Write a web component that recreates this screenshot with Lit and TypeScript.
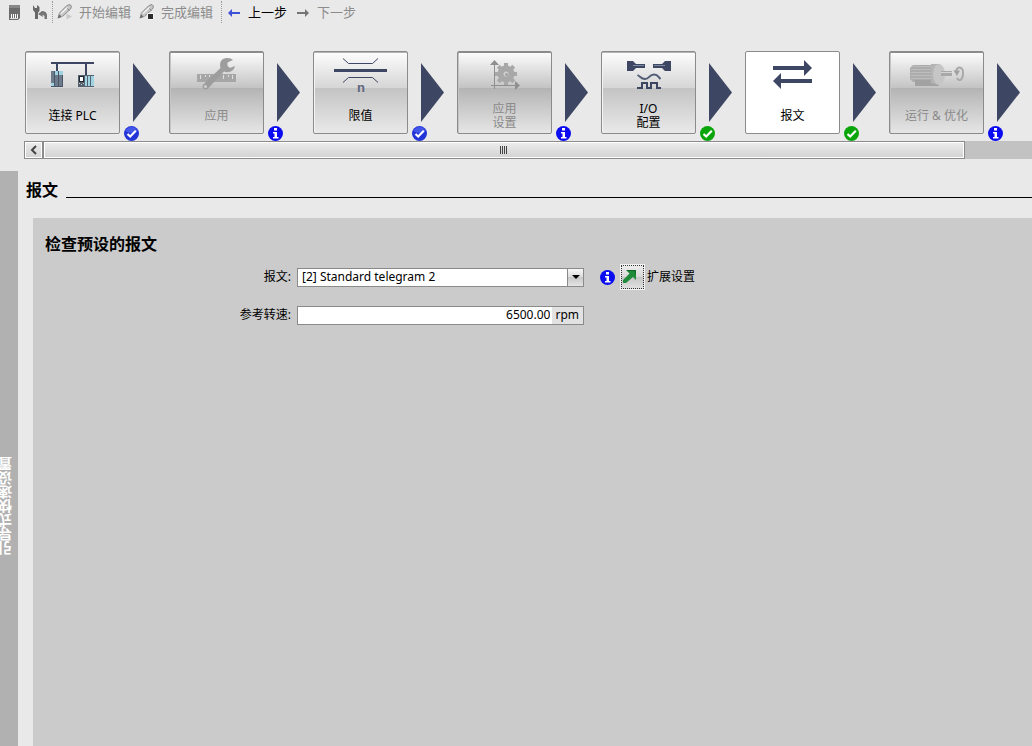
import { LitElement, html, svg, css, nothing } from "lit";
import { customElement, property, state } from "lit/decorators.js";
import { classMap } from "lit/directives/class-map.js";

type Badge = "done" | "ok" | "info";

interface Step {
  id: string;
  lines: string[];
  badge: Badge;
  disabled?: boolean;
}

const STEPS: Step[] = [
  { id: "plc", lines: ["连接 PLC"], badge: "done" },
  { id: "app", lines: ["应用"], badge: "info", disabled: true },
  { id: "limits", lines: ["限值"], badge: "done" },
  { id: "appset", lines: ["应用", "设置"], badge: "info", disabled: true },
  { id: "io", lines: ["I/O", "配置"], badge: "ok" },
  { id: "telegram", lines: ["报文"], badge: "ok" },
  { id: "run", lines: ["运行 & 优化"], badge: "info", disabled: true },
];

const NAVY = "#3d4663";

const STEP_ICONS: Record<string, unknown> = {
  plc: svg`
    <path d="M26 11H69V13H62V24H60V13H33V20H31V13H26Z" fill=${NAVY} />
    <path d="M26 20H38V36H26Z" fill="#6d7b8a" />
    <path d="M30 20H38V24H30ZM26 32H29V35H26Z" fill="#9fd3e2" />
    <path d="M29.5 20V36M33.5 20V36M37.5 24V36M26 35.5H38" stroke="#4a5568" fill="none" />
    <path d="M53 24H69V36H53Z" fill="#56616f" />
    <path d="M60 25H62V35H60ZM63 25H65V35H63ZM66 25H69V35H66Z" fill="#9fd3e2" />
    <path d="M54 25H59V31H54Z" fill="#20262f" />
    <path d="M55 26H58V30H55Z" fill="#fff" />
    <path d="M54 32H55V33H54ZM56 33H57V34H56ZM58 32H59V33H58Z" fill="#c4ccd4" />`,
  app: svg`
    <path d="M28 23H67V31H28Z" fill="#a6a6a6" />
    <path d="M31.500 24V28M36.500 24V26M40.500 24V26M44.500 24V28M54.500 24V28M59.500 24V26M63.500 24V28" stroke="#dedede" />
    <path d="M54 8C58 6 62 7 64 9L58.500 11.500L58.500 15L61 17L66 15C65 20 60 22.500 55 20.500L39 37.500C37 39.500 33.500 38.500 33.500 35.500C33.500 34.500 34 34 34.500 33.200L51.500 17C50.500 13 51.500 9.500 54 8Z" fill="#9d9d9d" />
    <circle cx="36.500" cy="35.500" r="1.500" fill="#cfcfcf" />`,
  limits: svg`
    <path d="M30 7.500L35.500 12.500H59.500L65 7.500M30 31.500L35.500 26.500H59.500L65 31.500" stroke=${NAVY} fill="none" />
    <path d="M21 18H74V21H21Z" fill=${NAVY} />
    <text class="glyph" x="48" y="41" text-anchor="middle">n</text>`,
  appset: svg`
    <g fill="#a8a8a8">
      <circle cx="49" cy="23" r="8.500" />
      ${[0, 45, 90, 135].map(
        (a) => svg`<path d="M47 12H51V34H47Z" transform="rotate(${a} 49 23)" />`
      )}
    </g>
    <circle cx="49" cy="23" r="2.500" fill="#d0d0d0" />
    <circle cx="49.500" cy="23.500" r="1.500" fill="#a0a0a0" />
    <path d="M37.500 12V38M34 34.500H60" stroke="#8f8f8f" />
    <path d="M33 14L37.500 9L42 14ZM58 30L63 34.500L58 39Z" fill="#8f8f8f" />`,
  io: svg`
    <path d="M26 10H32L35 13H44V17H35L32 20H26Z" fill=${NAVY} />
    <path d="M70 10H64L61 13H52V17H61L64 20H70Z" fill=${NAVY} />
    <path d="M32 14.500H43M53 14.500H64" stroke="#7e8aa0" />
    <path d="M36.500 24C40 26 40 28 44 28C48.500 28 48 23.500 53 23.500C57 23.500 57 25.500 59.500 28" stroke="#525c75" stroke-width="2" fill="none" />
    <path d="M36 37H41V32H46V37H50V32H56V37H60" stroke=${NAVY} stroke-width="2" fill="none" />`,
  telegram: svg`
    <path d="M28 15H59V9L67 17L59 25V19H28Z" fill=${NAVY} />
    <path d="M67 28H36V22L28 30L36 38V32H67Z" fill=${NAVY} />`,
  run: svg`
    <path d="M24 14H44V31H24L21 28V17Z" fill="#acacac" />
    <path d="M24 15.500H44M22 18.500H44M22 21.500H44M22 24.500H44M22 27.500H44" stroke="#bdbdbd" />
    <path d="M26 29H44L50 32V35H26Z" fill="#a2a2a2" />
    <path d="M42 13L51 13V34L42 32Z" fill="#b4b4b4" />
    <ellipse cx="50" cy="23.500" rx="6" ry="10.500" fill="#c6c6c6" />
    <path d="M52 20H63V25H52Z" fill="#a8a8a8" />
    <path d="M52 21.500H63" stroke="#d4d4d4" />
    <path d="M67 20C69 15 74 15.500 74 22C74 29 70 31 68 27" stroke="#a8a8a8" stroke-width="2" fill="none" />
    <path d="M64.500 19.500H71L68 25Z" fill="#a0a0a0" />`,
};

const badgeIcon = (kind: Badge) => html`
  <svg viewBox="0 0 15 15" width="15" height="15" aria-hidden="true">
    <circle cx="7.500" cy="7.500" r="7.500" fill=${kind === "ok" ? "#0aa50a" : kind === "done" ? "#2334d8" : "#0c0cf0"} />
    ${kind === "done" ? svg`<path d="M1.500 5A6.500 6.500 0 0 1 13.500 5Q7 9 1.500 5Z" fill="#4257e8" />` : nothing}
    ${kind === "info"
      ? svg`<path d="M6 2H9V4.500H6ZM5 6H9V11H10.500V12.500H5V11H6.500V7.500H5Z" fill="#fff" />`
      : svg`<path d="M3.500 8L6.200 10.500L11.800 4.800" stroke="#fff" stroke-width="2.200" fill="none" />`}
  </svg>
`;

const pencil = svg`
  <path d="M2 9L9.500 1.500L13 0.500L14.500 2L13.500 5L6 12L1 14Z" fill="#c6c6c6" />
  <path d="M2 9.500L10 1.500L13 0.500L14.500 2.200L13.500 5L5.500 12.500M9 3L12.500 6.500" stroke="#8a8a8a" fill="none" />
  <path d="M4 9.500L10.500 3.200" stroke="#f2f2f2" stroke-width="1.500" />
  <path d="M0.500 14.500L1.800 10L5 13Z" fill="#6e6e6e" />`;

@customElement("wizard-step")
export class WizardStep extends LitElement {
  @property({ attribute: false }) step!: Step;
  @property({ type: Boolean }) active = false;

  static styles = css`
    :host {
      display: flex;
      flex: none;
      align-items: center;
      gap: 13px;
      position: relative;
    }
    .tile {
      display: flex;
      flex-direction: column;
      box-sizing: border-box;
      width: 95px;
      height: 83px;
      margin: 0;
      padding: 0;
      border: 1px solid #8b8b8b;
      border-radius: 2px;
      box-shadow: inset 0 1px #b4b4b4, inset 1px 0 #f4f4f4;
      background: linear-gradient(#fdfdfd, #d6d6d6 44%, #c3c3c3 44%, #e9e9e9);
      color: #000;
      font: 12px/14px "Noto Sans", "Noto Sans CJK SC", sans-serif;
    }
    .tile.disabled {
      background: linear-gradient(#fdfdfd, #c4c4c4 44%, #b3b3b3 44%, #e6e6e6);
      box-shadow: inset 0 1px #8b8b8b, inset 1px 0 #c4c4c4;
      color: #8a8a8a;
    }
    .tile.active {
      background: #fff;
      box-shadow: none;
    }
    .art {
      display: block;
      flex: none;
    }
    .glyph {
      font: bold 13px "Liberation Sans", sans-serif;
      fill: #5d6780;
    }
    .label {
      flex: 1;
      align-self: stretch;
      display: flex;
      flex-direction: column;
      align-items: center;
      justify-content: center;
    }
    .arrow {
      display: block;
    }
    .badge {
      position: absolute;
      left: 99px;
      bottom: -7px;
      display: flex;
    }
  `;

  render() {
    const { id, lines, badge, disabled } = this.step;
    return html`
      <button
        type="button"
        class=${classMap({ tile: true, disabled: !!disabled, active: this.active })}
        ?disabled=${disabled}
      >
        <svg class="art" viewBox="1 1 93 46" width="93" height="46" aria-hidden="true">
          ${STEP_ICONS[id]}
        </svg>
        <span class="label">${lines.map((l) => html`<span>${l}</span>`)}</span>
      </button>
      <svg class="arrow" viewBox="0 0 23 59" width="23" height="59" aria-hidden="true">
        <path d="M0 0L23 29.500L0 59Z" fill=${NAVY} />
      </svg>
      <span class="badge">${badgeIcon(badge)}</span>
    `;
  }
}

@customElement("app-root")
export class AppRoot extends LitElement {
  @state() private current = "telegram";

  static styles = css`
    :host {
      display: flex;
      flex-direction: column;
      min-height: 100vh;
      background: #e9e9e9;
      color: #000;
      font: 12px/16px "Noto Sans", "Noto Sans CJK SC", sans-serif;
    }
    button,
    input,
    select {
      font: inherit;
      color: inherit;
      margin: 0;
    }
    svg {
      display: block;
      flex: none;
    }
    .toolbar {
      display: flex;
      align-items: center;
      height: 24px;
      padding-left: 7px;
      font-size: 13px;
    }
    .tool {
      display: flex;
      align-items: center;
      gap: 6px;
      padding: 0 4px;
      border: 0;
      background: none;
      white-space: nowrap;
    }
    .tool.icon {
      padding: 0 4px 0 0;
    }
    .tool.icon:first-child {
      padding-right: 9px;
    }
    .tool:disabled {
      color: #8c8c8c;
    }
    .sep {
      height: 22px;
      border-left: 1px dotted #999;
    }
    .tool:disabled + .sep {
      margin-left: 4px;
    }
    .steps {
      display: flex;
      gap: 13px;
      padding: 27px 0 7px 25px;
      overflow: hidden;
    }
    .scroll {
      display: flex;
      height: 18px;
      margin-left: 24px;
      background: #c2c2c2;
    }
    .scroll-btn,
    .thumb {
      display: flex;
      align-items: center;
      justify-content: center;
      box-sizing: border-box;
      padding: 0;
      border: 1px solid #8b8b8b;
      box-shadow: inset 0 0 0 1px #fff;
      background: linear-gradient(#ededed, #d2d2d2);
    }
    .scroll-btn {
      width: 19px;
    }
    .track {
      flex: 1;
      display: flex;
    }
    .thumb {
      width: 93.2%;
    }
    .work {
      flex: 1;
      display: flex;
      margin-top: 12px;
    }
    .side {
      flex: none;
      display: flex;
      align-items: center;
      width: 18px;
      padding-top: 94px;
      box-sizing: border-box;
      background: #b1b1b1;
      overflow: hidden;
    }
    .side-label {
      writing-mode: vertical-rl;
      transform: rotate(180deg);
      color: #fff;
      font-size: 14px;
      font-weight: bold;
      line-height: 12px;
      white-space: nowrap;
    }
    .main {
      flex: 1;
      display: flex;
      flex-direction: column;
      min-width: 0;
    }
    .heading {
      display: flex;
      align-items: flex-end;
      gap: 8px;
      padding: 8px 0 0 8px;
    }
    h1,
    h2 {
      margin: 0;
      font-size: 16px;
      line-height: 22px;
      font-weight: bold;
    }
    .rule {
      flex: 1;
      height: 1px;
      margin-bottom: 3px;
      background: #000;
    }
    .panel {
      flex: 1;
      margin: 17px 0 0 15px;
      padding: 15px 12px;
      background: #cbcbcb;
    }
    .form {
      display: grid;
      grid-template-columns: 246px 287px auto;
      column-gap: 6px;
      row-gap: 12px;
      align-items: center;
      justify-content: start;
      margin-top: 9px;
    }
    .name {
      display: flex;
      align-items: center;
      justify-content: flex-end;
      grid-column: 1;
      height: 26px;
    }
    .field {
      display: grid;
      grid-template-columns: 1fr auto;
      box-sizing: border-box;
      height: 19px;
      border: 1px solid #8a8a8a;
      background: #fff;
    }
    .field select {
      grid-area: 1 / 1 / 2 / 3;
      appearance: none;
      min-width: 0;
      padding: 0 20px 0 4px;
      border: 0;
      background: none;
      line-height: 16px;
    }
    .drop {
      grid-area: 1 / 2;
      display: flex;
      align-items: center;
      justify-content: center;
      width: 15px;
      border-left: 1px solid #8a8a8a;
      background: linear-gradient(#f8f8f8, #dadada 50%, #c8c8c8 50%, #e4e4e4);
      pointer-events: none;
    }
    .field input {
      min-width: 0;
      padding: 0 2px 0 4px;
      border: 0;
      background: none;
      text-align: right;
      line-height: 16px;
    }
    .unit {
      padding: 0 4px 0 3px;
      background: #e2e2e2;
    }
    .extra {
      display: flex;
      align-items: center;
      gap: 5px;
      padding-left: 10px;
    }
    .go {
      box-sizing: border-box;
      padding: 1px;
      border: 1px solid #f4f4f4;
      background: linear-gradient(#efefef, #d8d8d8 50%, #c6c6c6 50%, #e2e2e2);
      outline: 1px dotted #333;
      outline-offset: -2px;
    }
    .go-label {
      margin-left: -3px;
    }
  `;

  private renderToolbar() {
    return html`
      <nav class="toolbar">
        <button class="tool icon" type="button" aria-label="存储卡">
          <svg width="16" height="18" viewBox="0 0 16 18">
            <path d="M2 2H13V15L11 17H2Z" fill="#6b6b6b" />
            <path d="M2 2H13V5H2Z" fill="#888" />
            <path d="M4.500 11V15M6.500 11V15M8.500 11V15M10.500 11V15" stroke="#fff" />
            <path d="M3 15.500H11" stroke="#ddd" />
          </svg>
        </button>
        <button class="tool icon" type="button" aria-label="工具">
          <svg width="16" height="16" viewBox="0 0 16 16">
            <path d="M1 1L3 4H5V1L7.500 3V7L6 8.500V15H3V8.500L1 6Z" fill="#686868" />
            <path d="M6 10L10 7C13 6.500 15 9 15 11V15H12.500V12L10.500 10.500L11 13Z" fill="#757575" />
          </svg>
        </button>
        <span class="sep"></span>
        <button class="tool" type="button" disabled>
          <svg width="16" height="16" viewBox="0 0 16 16">
            ${pencil}
            <path d="M9.500 9.500L15 12.500L9.500 15.500Z" fill="#c9c9c9" />
          </svg>
          开始编辑
        </button>
        <button class="tool" type="button" disabled>
          <svg width="16" height="16" viewBox="0 0 16 16">
            ${pencil}
            <path d="M8.500 9.500H14.500V15.500H8.500Z" fill="#2c2c2c" stroke="#f6f6f6" />
          </svg>
          完成编辑
        </button>
        <span class="sep"></span>
        <button class="tool" type="button">
          <svg width="16" height="16" viewBox="0 0 16 16">
            <path d="M2 9L6 5V8H14V10H6V13Z" fill="#3d50d6" />
          </svg>
          上一步
        </button>
        <button class="tool" type="button" disabled>
          <svg width="16" height="16" viewBox="0 0 16 16">
            <path d="M14 9L10 5V8H2V10H10V13Z" fill="#757575" />
          </svg>
          下一步
        </button>
      </nav>
    `;
  }

  render() {
    return html`
      ${this.renderToolbar()}
      <div class="steps">
        ${STEPS.map(
          (s) => html`<wizard-step
            .step=${s}
            ?active=${s.id === this.current}
            @click=${() => !s.disabled && (this.current = s.id)}
          ></wizard-step>`
        )}
      </div>
      <div class="scroll">
        <button class="scroll-btn" type="button" aria-label="向左滚动">
          <svg width="8" height="10" viewBox="0 0 8 10">
            <path d="M6 1L2 5L6 9" stroke="#444" stroke-width="2" fill="none" />
          </svg>
        </button>
        <div class="track">
          <div class="thumb">
            <svg width="8" height="8" viewBox="0 0 8 8">
              <path d="M0.500 0V8M2.500 0V8M4.500 0V8M6.500 0V8" stroke="#444" />
            </svg>
          </div>
        </div>
      </div>
      <div class="work">
        <aside class="side"><span class="side-label">引导式快速设置</span></aside>
        <main class="main">
          <header class="heading">
            <h1>报文</h1>
            <span class="rule"></span>
          </header>
          <section class="panel">
            <h2>检查预设的报文</h2>
            <div class="form">
              <label class="name" for="telegram">报文:</label>
              <div class="field">
                <select id="telegram">
                  <option>[2] Standard telegram 2</option>
                </select>
                <span class="drop">
                  <svg width="8" height="4" viewBox="0 0 8 4"><path d="M0 0H8L4 4Z" /></svg>
                </span>
              </div>
              <div class="extra">
                ${badgeIcon("info")}
                <button class="go" id="go" type="button" aria-labelledby="go-label">
                  <svg width="21" height="22" viewBox="0 0 21 22">
                    <path d="M4 4H14V14L11 11L4 17L1 17V14L7.500 7.500Z" fill="#1f8a3a" />
                    <path d="M5 4.500H13.500V8" stroke="#0f6426" fill="none" />
                  </svg>
                </button>
                <label class="go-label" id="go-label" for="go">扩展设置</label>
              </div>
              <label class="name" for="speed">参考转速:</label>
              <div class="field">
                <input id="speed" type="text" value="6500.00" />
                <span class="unit">rpm</span>
              </div>
            </div>
          </section>
        </main>
      </div>
    `;
  }
}
